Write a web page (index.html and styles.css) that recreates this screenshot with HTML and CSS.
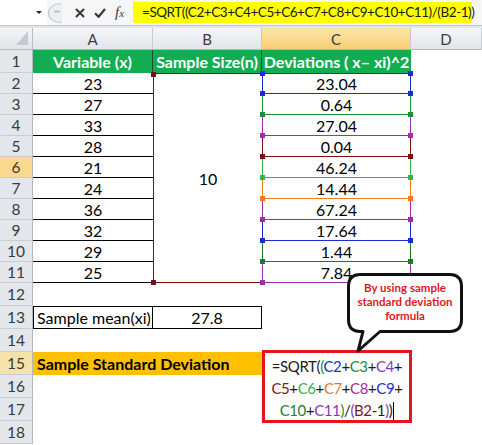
FILE: index.html
```html
<!DOCTYPE html>
<html>
<head>
<meta charset="utf-8">
<link rel="stylesheet" href="styles.css">
</head>
<body>
<div class="fbar">
  <div class="namebox"><span class="dd"></span></div>
  <div class="tools">
    <svg class="split" width="16" height="22" viewBox="0 0 16 22"><path d="M15 1.5 C6 1.5 1.5 6 1.5 11 C1.5 16 6 20.5 15 20.5" fill="#eceef1" stroke="#c3c7cd" stroke-width="1.2"/><rect x="7" y="8.5" width="6" height="2" rx="1" fill="#b9bdc3"/></svg>
    <svg class="ix" width="10" height="10" viewBox="0 0 10 10"><path d="M1 1L9 9M9 1L1 9" stroke="#3a3a3a" stroke-width="2.1" fill="none"/></svg>
    <svg class="ick" width="12" height="10" viewBox="0 0 12 10"><path d="M1 5.2L4.6 8.8L11 1" stroke="#3a3a3a" stroke-width="2.2" fill="none"/></svg>
    <span class="fx"><i>f</i><i class="fxx">x</i></span>
  </div>
  <div class="finput">=SQRT((C2+C3+C4+C5+C6+C7+C8+C9+C10+C11)/(B2-1))</div>
</div>
<div class="gap"></div>
<div class="sheet">
  <div class="grid">
    <div class="corner"><span class="tri"></span></div>
    <div class="ch">A</div>
    <div class="ch">B</div>
    <div class="ch sel">C</div>
    <div class="ch">D</div>

    <div class="rh">1</div>
    <div class="g sep">Variable (x)</div>
    <div class="g sep">Sample Size(n)</div>
    <div class="g">Deviations ( x– xi)^2</div>
    <div class="e"></div>

    <div class="rh">2</div>
    <div class="a">23</div>
    <div class="bm">10</div>
    <div class="cc first c-blue">23.04</div>
    <div class="e"></div>

    <div class="rh">3</div>
    <div class="a">27</div>
    <div class="cc c-green">0.64</div>
    <div class="e"></div>

    <div class="rh">4</div>
    <div class="a">33</div>
    <div class="cc c-purple">27.04</div>
    <div class="e"></div>

    <div class="rh">5</div>
    <div class="a">28</div>
    <div class="cc c-maroon">0.04</div>
    <div class="e"></div>

    <div class="rh sel">6</div>
    <div class="a">21</div>
    <div class="cc c-lgreen">46.24</div>
    <div class="e"></div>

    <div class="rh">7</div>
    <div class="a">24</div>
    <div class="cc c-orange">14.44</div>
    <div class="e"></div>

    <div class="rh">8</div>
    <div class="a">36</div>
    <div class="cc c-magenta">67.24</div>
    <div class="e"></div>

    <div class="rh">9</div>
    <div class="a">32</div>
    <div class="cc c-blue">17.64</div>
    <div class="e"></div>

    <div class="rh">10</div>
    <div class="a">29</div>
    <div class="cc c-dgreen">1.44</div>
    <div class="e"></div>

    <div class="rh">11</div>
    <div class="a">25</div>
    <div class="cc c-purple">7.84</div>
    <div class="e"></div>

    <div class="rh">12</div>
    <div class="e"></div><div class="e"></div><div class="e"></div><div class="e"></div>

    <div class="rh">13</div>
    <div class="a13">Sample mean(xi)</div>
    <div class="b13">27.8</div>
    <div class="e"></div><div class="e"></div>

    <div class="rh">14</div>
    <div class="e"></div><div class="e"></div><div class="e"></div><div class="e"></div>

    <div class="rh sel2">15</div>
    <div class="ssd">Sample Standard Deviation</div>
    <div class="fbox">=SQRT(<span class="t-green">(</span><span class="t-blue">C2</span>+<span class="t-green">C3</span>+<span class="t-purple">C4</span>+<br><span class="t-maroon">C5</span>+<span class="t-lgreen">C6</span>+<span class="t-orange">C7</span>+<span class="t-magenta">C8</span>+<span class="t-blue">C9</span>+<br><span class="t-dgreen">C10</span>+<span class="t-purple">C11</span><span class="t-green">)</span>/<span class="t-purple">(</span><span class="t-maroon">B2</span>-1<span class="t-purple">)</span>)<span class="cursor"></span></div>
    <div class="e"></div>

    <div class="rh">16</div>
    <div class="e"></div><div class="e"></div><div class="e"></div>

    <div class="rh">17</div>
    <div class="e"></div><div class="e"></div><div class="e"></div>

    <div class="rh">18</div>
    <div class="e"></div><div class="e"></div><div class="e"></div><div class="e"></div>
  </div>

  <div class="callout">
    <svg width="128" height="88" viewBox="340 268 128 88"><path d="M360.5 274.5 H449.5 Q461.5 274.5 461.5 286.5 V319.5 Q461.5 331.5 449.5 331.5 H380 L358 351 L363 331.5 H360.5 Q348.5 331.5 348.5 319.5 V286.5 Q348.5 274.5 360.5 274.5 Z" fill="#fff" stroke="#111" stroke-width="3" stroke-linejoin="round"/></svg>
    <div class="ctext">By using sample<br>standard deviation<br>formula</div>
  </div>
</div>
</body>
</html>
```

FILE: styles.css
```css
* { box-sizing: border-box; margin: 0; padding: 0; }
body {
  margin: 0;
  width: 482px;
  height: 445px;
  overflow: hidden;
  background: #fff;
  font-family: Lato, "Liberation Sans", sans-serif;
  color: #000;
}

/* formula bar */
.fbar {
  display: flex;
  height: 26px;
  border-bottom: 1px solid #c2c6cc;
  background: #f6f6f7;
}
.namebox {
  width: 47px;
  background: #fff;
  display: flex;
  align-items: center;
  justify-content: flex-end;
  padding-right: 5px;
  padding-bottom: 1px;
}
.dd {
  width: 0; height: 0;
  border-left: 3px solid transparent;
  border-right: 3px solid transparent;
  border-top: 3px solid #222;
}
.tools {
  width: 86px;
  display: flex;
  align-items: center;
}
.split { display: block; }
.ix { display: block; margin-left: 12px; }
.ick { display: block; margin-left: 9px; }
.fx {
  margin-left: 9px;
  font-family: "Liberation Serif", serif;
  font-size: 15px;
  color: #3a3a3a;
  line-height: 1;
}
.fxx { font-size: 11px; }
.finput {
  width: 339px;
  height: 21px;
  margin-top: 2px;
  background: #ffff00;
  font-size: 13.5px;
  letter-spacing: -0.45px;
  padding-left: 9px;
  line-height: 21px;
  color: #1a1a1a;
  white-space: nowrap;
}
.gap { height: 2px; background: #e3e6ea; }

/* sheet */
.sheet { position: relative; }
.grid {
  display: grid;
  grid-template-columns: 33px 120px 109px 149px 71px;
  grid-template-rows: 22px 23px repeat(10, 21px) repeat(7, 23px);
}
.corner {
  background: linear-gradient(#f3f4f6, #e1e4e9);
  border-right: 1px solid #b8bdc5;
  border-bottom: 1px solid #b8bdc5;
  display: flex;
  align-items: flex-end;
  justify-content: flex-end;
  padding: 0 4px 4px 0;
}
.tri {
  width: 0; height: 0;
  border-left: 12px solid transparent;
  border-bottom: 14px solid #c6c9cf;
}
.ch {
  background: linear-gradient(#f5f6f8, #e1e4e9);
  border-right: 1px solid #c6cad1;
  border-bottom: 1px solid #b3b8c0;
  display: flex;
  align-items: center;
  justify-content: center;
  font-size: 15px;
  color: #3c3c3c;
}
.ch.sel { background: linear-gradient(#fbe6a8, #f7cf76); border-bottom-color: #e0b050; }
.rh {
  background: #e3e6eb;
  border-right: 1px solid #b3b8c0;
  border-bottom: 1px solid #c8ccd3;
  display: flex;
  align-items: center;
  justify-content: center;
  font-size: 15.5px;
  color: #3a3a3a;
}
.rh.sel { background: #f9da8c; }
.rh.sel2 { background: #f5e2a8; }

.g {
  background: #12ad50;
  color: #fff;
  font-weight: 700;
  font-size: 16px;
  display: flex;
  align-items: center;
  justify-content: center;
  white-space: nowrap;
}
.g.sep { border-right: 1px solid #244a31; }

.a {
  border-bottom: 1px solid #000;
  display: flex;
  align-items: center;
  justify-content: center;
  font-size: 16px;
}
.bm {
  grid-row: span 10;
  border: 1px solid #7d0f14;
  border-right: none;
  position: relative;
  display: flex;
  align-items: center;
  justify-content: center;
  font-size: 16px;
}
.bm::before {
  content: "";
  position: absolute;
  z-index: 2;
  left: -3px;
  top: -2px;
  width: 5px;
  height: 5px;
  background: #7d0f14;
  box-shadow: 0 208px 0 #7d0f14;
}

.cc {
  border: 1px solid var(--c);
  border-top: none;
  position: relative;
  display: flex;
  align-items: center;
  justify-content: center;
  font-size: 16px;
}
.cc.first { border-top: 1px solid var(--c); }
.cc::before {
  content: "";
  position: absolute;
  z-index: 2;
  left: -3px;
  bottom: -3px;
  width: 5px;
  height: 5px;
  background: var(--c);
  box-shadow: 148px 0 0 var(--c);
}
.cc.first::after {
  content: "";
  position: absolute;
  z-index: 2;
  left: -3px;
  top: -3px;
  width: 5px;
  height: 5px;
  background: var(--c);
  box-shadow: 148px 0 0 var(--c);
}
.c-blue { --c: #1a2bd6; }
.c-green { --c: #228b37; }
.c-purple { --c: #9b2fae; }
.c-maroon { --c: #7d0f14; }
.c-lgreen { --c: #36b44c; }
.c-orange { --c: #f07c1e; }
.c-magenta { --c: #a8299f; }
.c-dgreen { --c: #1c7a2c; }

.a13 {
  border: 1px solid #000;
  display: flex;
  align-items: center;
  padding-left: 3px;
  font-size: 16px;
  white-space: nowrap;
}
.b13 {
  border: 1px solid #000;
  border-left: none;
  display: flex;
  align-items: center;
  justify-content: center;
  font-size: 16px;
}
.ssd {
  grid-column: span 2;
  background: #ffc000;
  font-weight: 700;
  font-size: 16px;
  display: flex;
  align-items: center;
  padding-left: 4px;
  white-space: nowrap;
}
.fbox {
  grid-row: span 3;
  margin: -2px -1px -2px 0;
  border: 3px solid #e8141b;
  background: #fff;
  position: relative;
  z-index: 1;
  text-align: center;
  font-size: 15px;
  letter-spacing: -0.4px;
  line-height: 22px;
  padding-top: 2px;
  color: #1a1a1a;
  white-space: nowrap;
}
.t-blue { color: #2230c0; }
.t-green { color: #228b37; }
.t-purple { color: #8a35b8; }
.t-maroon { color: #7a1a1a; }
.t-lgreen { color: #36b050; }
.t-orange { color: #e57a25; }
.t-magenta { color: #a0309a; }
.t-dgreen { color: #238038; }
.cursor {
  display: inline-block;
  width: 1px;
  height: 18px;
  background: #000;
  vertical-align: -4px;
  margin-left: 1px;
}

.callout {
  position: absolute;
  left: 340px;
  top: 240px;
  width: 128px;
  height: 88px;
  z-index: 3;
}
.callout svg { display: block; }
.ctext {
  position: absolute;
  left: 8px;
  top: 13px;
  width: 114px;
  text-align: center;
  color: #e3161d;
  font-weight: 700;
  font-size: 11.5px;
  line-height: 14px;
  white-space: nowrap;
}
```
